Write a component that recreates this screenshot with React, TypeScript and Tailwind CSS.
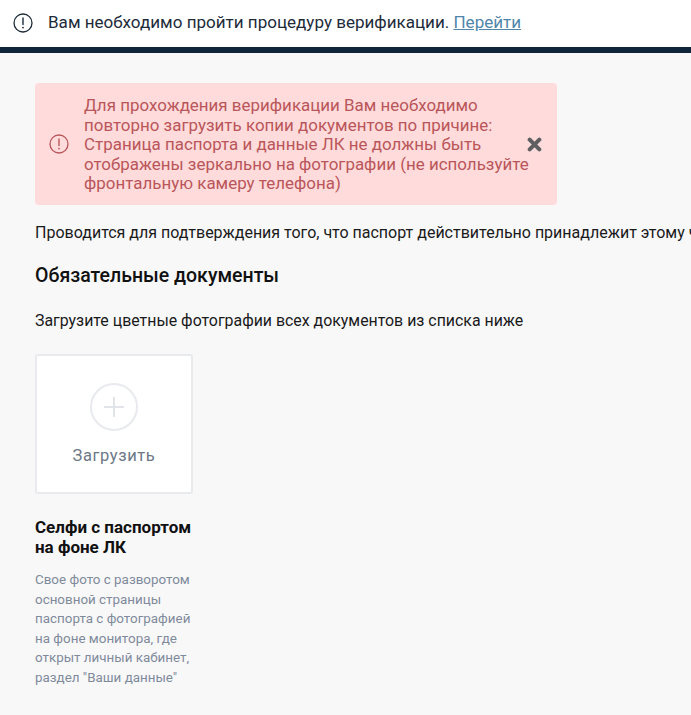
const font = "font-['Roboto',sans-serif]";

function CircleAlert({ className }: { className: string }) {
  return (
    <svg viewBox="0 0 20 20" fill="none" stroke="currentColor" className={className}>
      <circle cx="10" cy="10" r="9" strokeWidth="1.3" />
      <path d="M10 5v6.5" strokeWidth="1.4" strokeLinecap="round" />
      <circle cx="10" cy="14.6" r="0.9" fill="currentColor" stroke="none" />
    </svg>
  );
}

export default function App() {
  return (
    <div className={`${font} h-[715px] w-[691px] overflow-hidden bg-[#f8f8f9]`}>
      <div className="flex h-[47px] items-center gap-[15px] bg-white pb-[1px] pl-[13px] text-[17.05px] text-[#1d2b3a]">
        <CircleAlert className="h-5 w-5 shrink-0" />
        <p className="whitespace-nowrap">
          Вам необходимо пройти процедуру верификации.{" "}
          <span className="text-[#4f86ab] underline">Перейти</span>
        </p>
      </div>
      <div className="h-[6px] bg-[#10253a]" />

      <div className="pt-[30px] pl-[35px]">
        <div className="flex h-[122px] w-[522px] items-center rounded-[4px] bg-[#ffdbdb] pl-[14px] text-[#b9565a]">
          <CircleAlert className="h-5 w-5 shrink-0" />
          <p className="mt-[2px] ml-[15px] w-[443px] shrink-0 text-[16.95px] leading-[19.5px] whitespace-nowrap">
            Для прохождения верификации Вам необходимо
            <br />
            повторно загрузить копии документов по причине:
            <br />
            Страница паспорта и данные ЛК не должны быть
            <br />
            отображены зеркально на фотографии (не используйте
            <br />
            фронтальную камеру телефона)
          </p>
          <svg viewBox="0 0 14 14" className="h-[15px] w-[15px] shrink-0 text-[#5f5f62]">
            <path d="M2.5 2.5l9 9M11.5 2.5l-9 9" stroke="currentColor" strokeWidth="3.8" strokeLinecap="round" />
          </svg>
        </div>

        <p className="mt-[18px] w-[656px] overflow-hidden text-[16px] leading-[20px] whitespace-nowrap text-[#1a1a1a]">
          Проводится для подтверждения того, что паспорт действительно принадлежит этому человеку
        </p>
        <h2 className="mt-[21px] text-[19.5px] leading-[24px] font-medium text-[#111]">Обязательные документы</h2>
        <p className="mt-[23px] text-[15.9px] leading-[20px] text-[#1a1a1a]">
          Загрузите цветные фотографии всех документов из списка ниже
        </p>

        <div className="mt-[23px] flex h-[140px] w-[158px] flex-col items-center rounded-[3px] border-2 border-[#e8eaee] bg-white pt-[27px]">
          <div className="flex h-[48px] w-[48px] items-center justify-center rounded-full border-2 border-[#e8eaee]">
            <svg viewBox="0 0 20 20" className="h-5 w-5 text-[#e1e4e9]">
              <path d="M10 0v20M0 10h20" stroke="currentColor" strokeWidth="2" />
            </svg>
          </div>
          <span className="mt-[15px] text-[16.5px] leading-[20px] tracking-[0.6px] text-[#6c7886]">Загрузить</span>
        </div>

        <h3 className="mt-[24px] text-[17px] leading-[19.5px] font-bold text-[#111]">
          Селфи с паспортом
          <br />
          на фоне ЛК
        </h3>
        <p className="mt-[13px] text-[13.4px] leading-[19.6px] text-[#7f8a9b]">
          Свое фото с разворотом
          <br />
          основной страницы
          <br />
          паспорта с фотографией
          <br />
          на фоне монитора, где
          <br />
          открыт личный кабинет,
          <br />
          раздел "Ваши данные"
        </p>
      </div>
    </div>
  );
}
